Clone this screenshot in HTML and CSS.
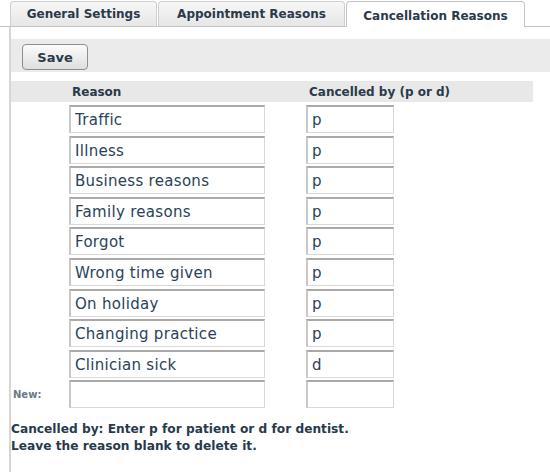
FILE: index.html
```html
<!DOCTYPE html>
<html>
<head>
<meta charset="utf-8">
<link rel="stylesheet" href="styles.css">
</head>
<body>
<div class="tabs">
  <div class="tab tab-general">General Settings</div>
  <div class="tab tab-appt">Appointment Reasons</div>
  <div class="tab tab-cancel active">Cancellation Reasons</div>
</div>
<div class="panel">
  <div class="toolbar"><button class="btn">Save</button></div>
  <div class="header">
    <span class="h-reason">Reason</span>
    <span class="h-by">Cancelled by (p or d)</span>
  </div>
  <div class="grid">
    <div class="lbl"></div><input class="in-reason" value="Traffic"><input class="in-by" value="p">
    <div class="lbl"></div><input class="in-reason" value="Illness"><input class="in-by" value="p">
    <div class="lbl"></div><input class="in-reason" value="Business reasons"><input class="in-by" value="p">
    <div class="lbl"></div><input class="in-reason" value="Family reasons"><input class="in-by" value="p">
    <div class="lbl"></div><input class="in-reason" value="Forgot"><input class="in-by" value="p">
    <div class="lbl"></div><input class="in-reason" value="Wrong time given"><input class="in-by" value="p">
    <div class="lbl"></div><input class="in-reason" value="On holiday"><input class="in-by" value="p">
    <div class="lbl"></div><input class="in-reason" value="Changing practice"><input class="in-by" value="p">
    <div class="lbl"></div><input class="in-reason" value="Clinician sick"><input class="in-by" value="d">
    <div class="lbl">New:</div><input class="in-reason" value=""><input class="in-by" value="">
  </div>
  <p class="note">Cancelled by: Enter p for patient or d for dentist.<br>Leave the reason blank to delete it.</p>
</div>
</body>
</html>
```
FILE: styles.css
```css
html, body {
  margin: 0;
  padding: 0;
  background: #fff;
  font-family: "DejaVu Sans", Verdana, sans-serif;
  color: #2c3e50;
}
.tabs {
  display: flex;
  align-items: flex-end;
  height: 27px;
  padding-left: 10px;
  border-bottom: 1px solid #c4c4c4;
  box-sizing: border-box;
}
.tab {
  height: 25px;
  box-sizing: border-box;
  border: 1px solid #cfcfcf;
  border-bottom: none;
  border-radius: 4px 4px 0 0;
  background: linear-gradient(#f7f7f7, #e6e6e6);
  font-size: 12px;
  font-weight: bold;
  color: #2a3a4a;
  display: flex;
  align-items: center;
  justify-content: center;
  margin-right: 1px;
  white-space: nowrap;
}
.tab-general { width: 147px; }
.tab-appt { width: 187px; }
.tab-cancel { width: 179px; }
.tab.active {
  background: #fff;
  height: 26px;
  margin-bottom: -1px;
  border-color: #c4c4c4;
  padding-top: 2px;
}
.panel {
  margin-left: 9px;
  border-left: 2px solid #d6d6d6;
  padding-top: 12px;
  min-height: 433px;
}
.toolbar {
  background: #ebebeb;
  height: 33px;
  padding: 5px 0 0 11px;
  box-sizing: border-box;
}
.btn {
  width: 66px;
  height: 26px;
  border: 1px solid #8e8e8e;
  border-radius: 4px;
  background: linear-gradient(#fbfbfb, #dedede);
  font-family: "DejaVu Sans", Verdana, sans-serif;
  font-size: 13px;
  font-weight: bold;
  color: #2a3a4a;
  padding: 0;
}
.header {
  margin-top: 9px;
  width: 522px;
  height: 21px;
  background: #e8e8e8;
  display: flex;
  align-items: center;
  font-size: 12px;
  font-weight: bold;
  color: #2a3a4a;
  white-space: nowrap;
}
.h-reason { margin-left: 61px; width: 237px; }
.grid {
  margin-top: 3px;
  display: grid;
  grid-template-columns: 58px 196px 88px;
  column-gap: 0;
  grid-auto-rows: 28px;
  row-gap: 2.6px;
}
.in-by { margin-left: 41px !important; }
.lbl {
  font-size: 10px;
  font-weight: bold;
  color: #6a7a88;
  display: flex;
  align-items: center;
  padding-left: 2px;
  padding-top: 1px;
}
.grid input {
  box-sizing: border-box;
  height: 28px;
  margin: 0;
  border-style: solid;
  border-width: 2px 1px 1px 2px;
  border-color: #a9a9a9 #d8d8d8 #d8d8d8 #c8c8c8;
  background: #fff;
  font-family: "DejaVu Sans", Verdana, sans-serif;
  font-size: 15px;
  letter-spacing: 0.3px;
  color: #2a4258;
  padding: 1px 4px 0;
  outline: none;
}
.in-reason { width: 196px; }
.in-by { width: 88px; }
.note {
  margin: 13px 0 0 0;
  font-size: 12.2px;
  font-weight: bold;
  line-height: 17px;
  color: #263a4c;
}
```
